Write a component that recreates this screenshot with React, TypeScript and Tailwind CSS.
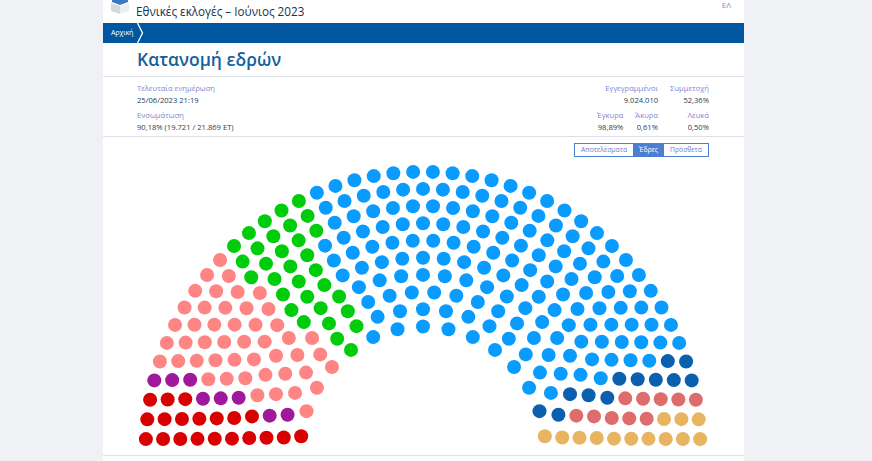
import React from 'react';

const ROWS = [15, 19, 22, 25, 29, 32, 35, 38, 41, 44];
const PARTIES = [
  { color: '#d90000', seats: 20 },
  { color: '#a0189c', seats: 8 },
  { color: '#ff8585', seats: 47 },
  { color: '#00cc0c', seats: 32 },
  { color: '#0a9bff', seats: 158 },
  { color: '#0a5fae', seats: 12 },
  { color: '#df6c6c', seats: 10 },
  { color: '#e8b45f', seats: 13 },
];

const CX = 320;
const CY = 292;

function buildSeats() {
  const seats: { x: number; y: number; a: number; color: string }[] = [];
  ROWS.forEach((n, i) => {
    const r = 122.5 + i * 17.2;
    for (let k = 0; k < n; k++) {
      const a = ((k + 0.5) * Math.PI) / n;
      seats.push({ x: CX - r * Math.cos(a), y: CY - r * Math.sin(a), a, color: '' });
    }
  });
  seats.sort((p, q) => p.a - q.a);
  let idx = 0;
  PARTIES.forEach((p) => {
    for (let j = 0; j < p.seats; j++) seats[idx++].color = p.color;
  });
  return seats;
}

const Stat = ({ label, value, className }: { label: string; value: string; className?: string }) => (
  <div className={`text-right ${className ?? ''}`}>
    <div className="text-[#7f86cf]">{label}</div>
    <div className="text-[#2f3d52]">{value}</div>
  </div>
);

const App: React.FC = () => {
  const seats = buildSeats();
  return (
    <div className="h-[461px] overflow-hidden bg-[#f0f1f4] font-['Open_Sans','Noto_Sans',sans-serif]">
      <div className="ml-[103px] h-full w-[641px] bg-white">
        <header className="flex h-[23px] overflow-hidden pl-2 pr-[13px]">
          <svg width="18" height="14" viewBox="0 0 18 14" className="shrink-0">
            <path d="M0 3 L9 6 L9 14 L0 11 Z" fill="#d5d9de" />
            <path d="M18 3 L9 6 L9 14 L18 11 Z" fill="#eceef1" />
            <path d="M1 0 L17 0 L17 2 L9 5 L1 2 Z" fill="#3b78bf" />
          </svg>
          <div className="ml-[7px] -mt-[6px]">
            <div className="text-[7px] leading-[8px] text-[#16324f]">ΥΠΟΥΡΓΕΙΟ ΕΣΩΤΕΡΙΚΩΝ</div>
            <h1 className="mt-[1px] text-[11.7px] leading-[16px] text-[#16324f]">Εθνικές εκλογές – Ιούνιος 2023</h1>
          </div>
          <span className="ml-auto text-[8px] leading-[10px] text-[#7f86cf]">ΕΛ</span>
        </header>
        <nav className="flex h-5 items-center bg-[#00569f] text-white">
          <span className="w-[34px] pb-[1px] pl-2 text-[7.2px] tracking-[-0.2px]">Αρχική</span>
          <svg width="7" height="20" viewBox="0 0 7 20">
            <path d="M0.5 0 L5.5 10 L0.5 20" fill="none" stroke="#ffffff" strokeWidth="1.3" />
          </svg>
        </nav>
        <div className="flex h-[34px] items-center border-b border-[#dfe0e8] pl-[34px]">
          <h2 className="text-[17.5px] font-semibold text-[#14609f]">Κατανομή εδρών</h2>
        </div>
        <section className="flex h-[60px] justify-between border-b border-[#dfe0e8] pl-[34px] pr-[35px] pt-[6px] text-[7.6px] leading-[11.5px]">
          <div className="flex flex-col gap-[4px]">
            <div>
              <div className="text-[#7f86cf]">Τελευταία ενημέρωση</div>
              <div className="text-[#2f3d52]">25/06/2023 21:19</div>
            </div>
            <div>
              <div className="text-[#7f86cf]">Ενσωμάτωση</div>
              <div className="text-[#2f3d52]">90,18% (19.721 / 21.869 ΕΤ)</div>
            </div>
          </div>
          <div className="flex flex-col gap-[4px]">
            <div className="flex justify-end gap-3">
              <Stat label="Εγγεγραμμένοι" value="9.024.010" />
              <Stat label="Συμμετοχή" value="52,36%" />
            </div>
            <div className="flex justify-end">
              <Stat label="Έγκυρα" value="98,89%" />
              <Stat label="Άκυρα" value="0,61%" className="ml-3" />
              <Stat label="Λευκά" value="0,50%" className="w-[51px]" />
            </div>
          </div>
        </section>
        <div className="flex justify-end pr-[35px] pt-[6px]">
          <div className="flex h-[14px] items-center border border-[#4d7fd1] text-[6.8px]">
            <span className="px-[6px] text-[#6f79c9]">Αποτελέσματα</span>
            <span className="flex h-full items-center bg-[#4d7fd1] px-[6px] text-white">Έδρες</span>
            <span className="px-[6px] text-[#6f79c9]">Πρόσθετα</span>
          </div>
        </div>
        <svg width="641" height="298" viewBox="0 0 641 298" className="block">
          {seats.map((s, i) => (
            <circle key={i} cx={s.x} cy={s.y} r="7" fill={s.color} />
          ))}
        </svg>
        <div className="border-t border-[#dfe0e8]" />
      </div>
    </div>
  );
};

export default App;
